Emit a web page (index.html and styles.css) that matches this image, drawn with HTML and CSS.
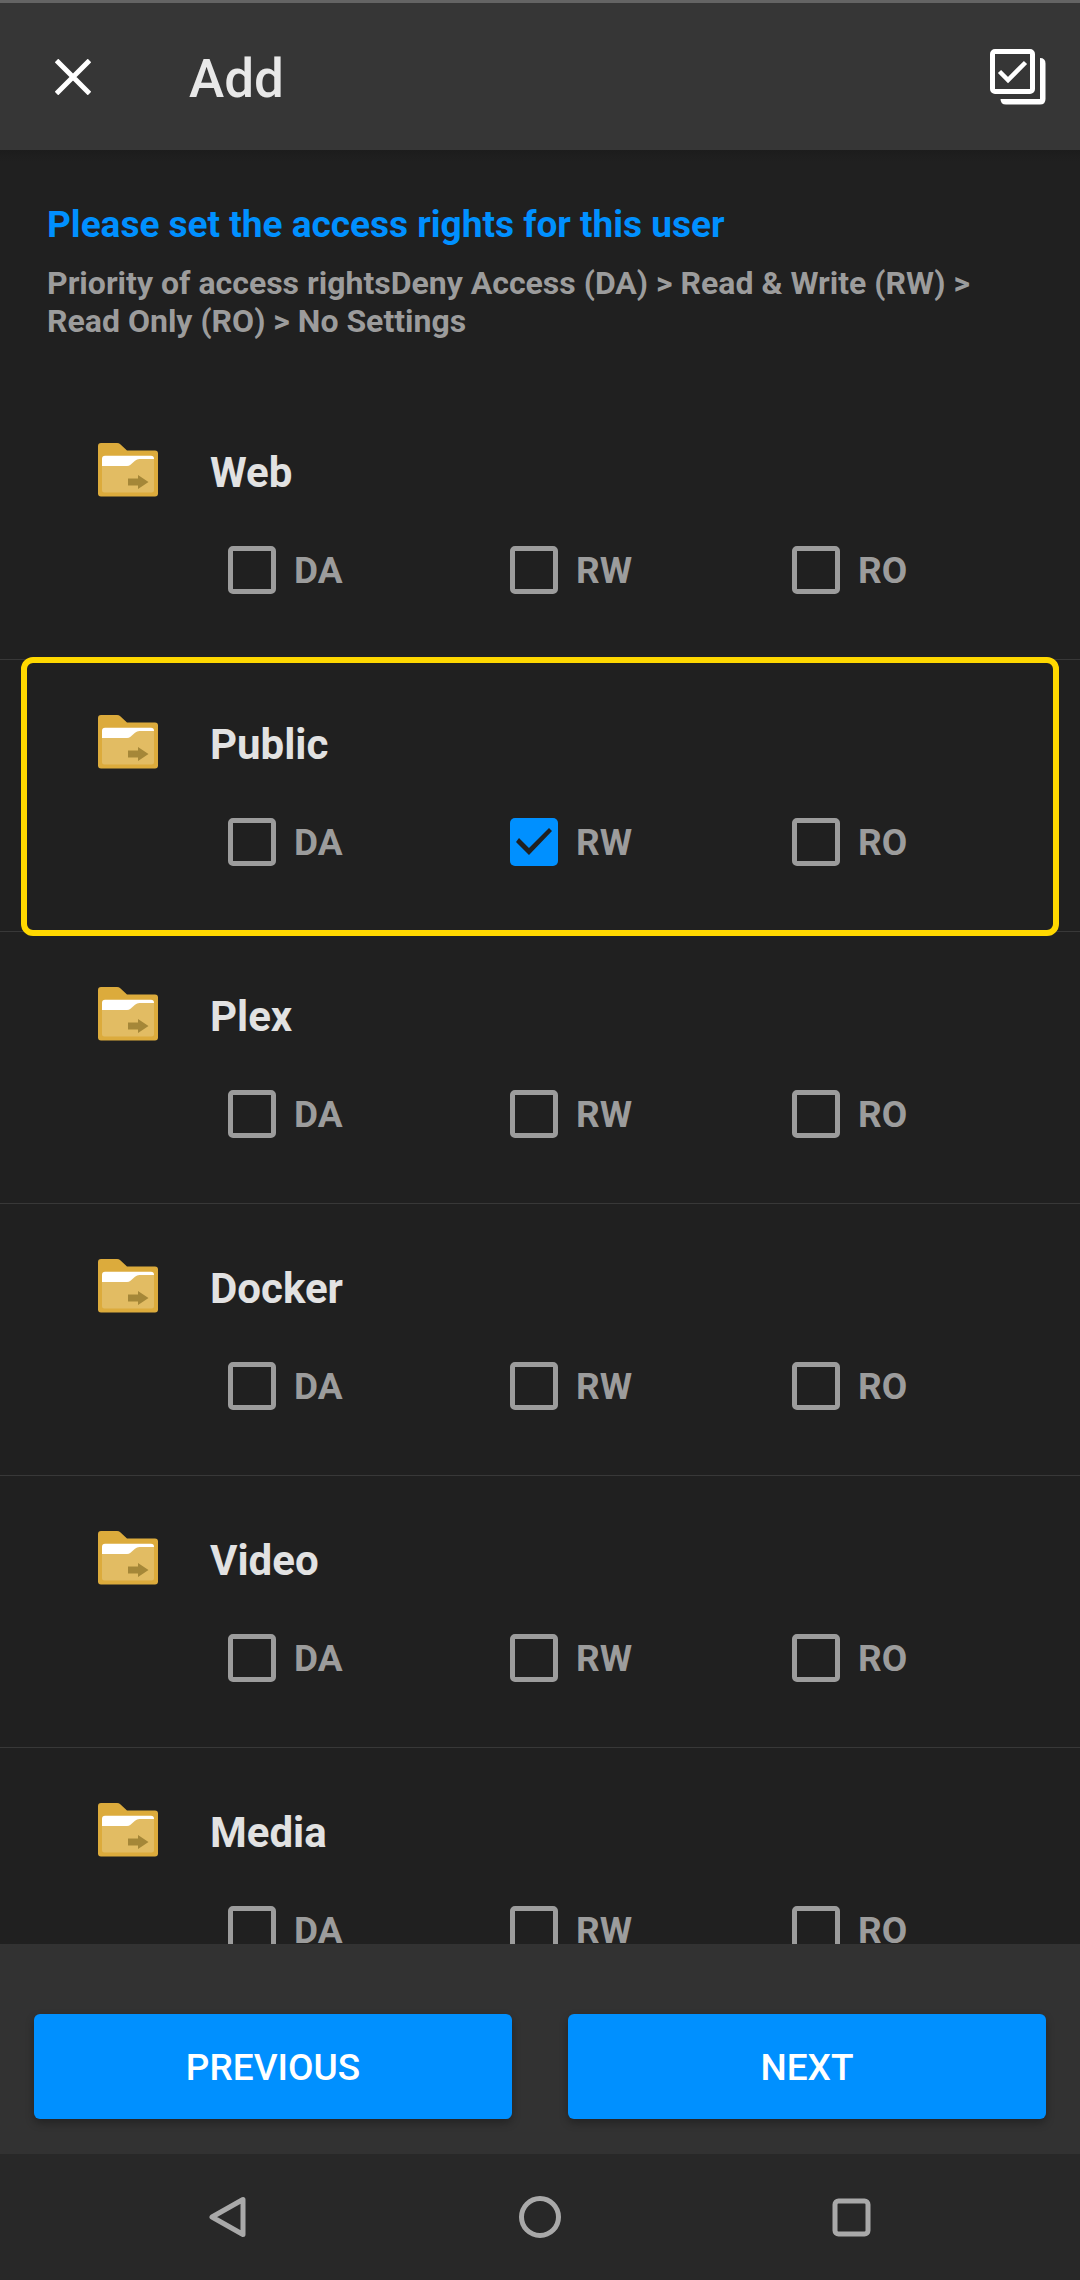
FILE: index.html
```html
<!DOCTYPE html>
<html lang="en">
<head>
  <meta charset="UTF-8" />
  <meta name="viewport" content="width=device-width, initial-scale=1.0"/>
  <title>Add</title>
  <link rel="stylesheet" href="styles.css">
</head>
<body>
  <svg width="0" height="0" class="symbols" aria-hidden="true">
    <symbol id="folder" viewBox="0 0 60 54">
      <path fill="#dcab3c" d="M3 0H19Q21 0 22 1L29 7.500H57Q60 7.500 60 10.500V50.500Q60 53.500 57 53.500H3Q0 53.500 0 50.500V3Q0 0 3 0Z"/>
      <path fill="#fff" d="M7 12.700H53Q56 12.700 56 15.700V26H4V15.700Q4 12.700 7 12.700Z"/>
      <path fill="#e2bc63" d="M4 23H29Q31 23 32.500 21.700L37 17.800Q39 16 41.500 16H56V47Q56 49.500 53.500 49.500H6.500Q4 49.500 4 47Z"/>
      <path fill="#a58738" d="M30 35.500H40V32L50.500 39L40 46V42.500H30Z"/>
    </symbol>
  </svg>

  <header class="topbar">
    <button type="button" class="icon-btn" aria-label="Close">
      <svg width="36" height="36" viewBox="0 0 36 36"><path d="M1.500 1.500L34.500 34.500M34.500 1.500L1.500 34.500" stroke="#fff" stroke-width="5"/></svg>
    </button>
    <h1>Add</h1>
    <button type="button" class="icon-btn" aria-label="Select all">
      <svg width="56" height="56" viewBox="0 0 56 56" fill="none" stroke="#fff">
        <rect x="2.500" y="2.500" width="40" height="40" rx="2.500" stroke-width="5"/>
        <path d="M9.500 22.500L18 31L35.500 13.500" stroke-width="4.500"/>
        <path fill="#fff" stroke="none" d="M50 9Q55.500 9 55.500 14.500V50Q55.500 55.500 50 55.500H16Q10.500 55.500 10.500 50H50Z"/>
      </svg>
    </button>
  </header>

  <main class="content">
    <div class="intro">
      <h2>Please set the access rights for this user</h2>
      <p>Priority of access rightsDeny Access (DA) &gt; Read &amp; Write (RW) &gt; Read Only (RO) &gt; No Settings</p>
    </div>
    <ul class="folders">
      <li class="folder">
        <div class="folder-head"><svg class="folder-icon"><use href="#folder"/></svg><h3>Web</h3></div>
        <div class="rights">
          <label><input type="checkbox" name="web-da">DA</label>
          <label><input type="checkbox" name="web-rw">RW</label>
          <label><input type="checkbox" name="web-ro">RO</label>
        </div>
      </li>
      <li class="folder highlight">
        <div class="folder-head"><svg class="folder-icon"><use href="#folder"/></svg><h3>Public</h3></div>
        <div class="rights">
          <label><input type="checkbox" name="public-da">DA</label>
          <label><input type="checkbox" name="public-rw" checked>RW</label>
          <label><input type="checkbox" name="public-ro">RO</label>
        </div>
      </li>
      <li class="folder">
        <div class="folder-head"><svg class="folder-icon"><use href="#folder"/></svg><h3>Plex</h3></div>
        <div class="rights">
          <label><input type="checkbox" name="plex-da">DA</label>
          <label><input type="checkbox" name="plex-rw">RW</label>
          <label><input type="checkbox" name="plex-ro">RO</label>
        </div>
      </li>
      <li class="folder">
        <div class="folder-head"><svg class="folder-icon"><use href="#folder"/></svg><h3>Docker</h3></div>
        <div class="rights">
          <label><input type="checkbox" name="docker-da">DA</label>
          <label><input type="checkbox" name="docker-rw">RW</label>
          <label><input type="checkbox" name="docker-ro">RO</label>
        </div>
      </li>
      <li class="folder">
        <div class="folder-head"><svg class="folder-icon"><use href="#folder"/></svg><h3>Video</h3></div>
        <div class="rights">
          <label><input type="checkbox" name="video-da">DA</label>
          <label><input type="checkbox" name="video-rw">RW</label>
          <label><input type="checkbox" name="video-ro">RO</label>
        </div>
      </li>
      <li class="folder">
        <div class="folder-head"><svg class="folder-icon"><use href="#folder"/></svg><h3>Media</h3></div>
        <div class="rights">
          <label><input type="checkbox" name="media-da">DA</label>
          <label><input type="checkbox" name="media-rw">RW</label>
          <label><input type="checkbox" name="media-ro">RO</label>
        </div>
      </li>
    </ul>
  </main>

  <footer class="actions">
    <button type="button">PREVIOUS</button>
    <button type="button">NEXT</button>
  </footer>

  <nav class="sysnav">
    <button type="button" class="icon-btn" aria-label="Back">
      <svg width="42" height="42" viewBox="0 0 42 42"><path d="M35 3.500V38.500L4 21Z"/></svg>
    </button>
    <button type="button" class="icon-btn" aria-label="Home">
      <svg width="42" height="42" viewBox="0 0 42 42"><circle cx="21" cy="21" r="18.500"/></svg>
    </button>
    <button type="button" class="icon-btn" aria-label="Recents">
      <svg width="42" height="42" viewBox="0 0 42 42"><rect x="5" y="5" width="33" height="33" rx="3.500"/></svg>
    </button>
  </nav>
</body>
</html>
```

FILE: styles.css
```css
* {
  margin: 0;
  padding: 0;
  box-sizing: border-box;
  font-family: Roboto, sans-serif;
}

body {
  background-color: #202020;
  height: 100vh;
  display: flex;
  flex-direction: column;
  color: #e2e2e2;
}

.symbols {
  position: absolute;
}

.icon-btn {
  display: flex;
  background: none;
  border: none;
  cursor: pointer;
}

.topbar {
  display: flex;
  align-items: center;
  height: 150px;
  padding: 0 34px 0 55px;
  border-top: 3px solid #646464;
  background-color: #363636;
}

.topbar h1 {
  flex: 1;
  margin-left: 98px;
  padding-top: 4px;
  font-size: 53px;
  font-weight: 500;
  color: #e8e8e8;
}

.content {
  flex: 1;
  min-height: 0;
  overflow: hidden;
  background: linear-gradient(#1c1c1c, #202020 12px);
}

.intro {
  padding: 53px 48px 48px 47px;
}

.intro h2 {
  font-size: 37px;
  line-height: 44px;
  font-weight: 700;
  color: #0090ff;
}

.intro p {
  margin-top: 17px;
  font-size: 32px;
  line-height: 38px;
  font-weight: 700;
  color: #9c9c9c;
}

.folders {
  list-style: none;
}

.folder {
  position: relative;
  height: 272px;
  padding-top: 55px;
  border-bottom: 1px solid #383838;
}

/* yellow frame drawn over the row and its dividers */
.highlight::after {
  content: "";
  position: absolute;
  inset: -3px 21px -5px;
  border: 6px solid #ffd800;
  border-radius: 12px;
  pointer-events: none;
}

.folder-head {
  display: flex;
  align-items: flex-start;
  gap: 52px;
  height: 60px;
  padding-left: 98px;
}

.folder-icon {
  width: 60px;
  height: 54px;
}

.folder-head h3 {
  font-size: 42px;
  line-height: 60px;
  font-weight: 700;
}

.rights {
  display: flex;
  margin-top: 43px;
  padding: 0 6px 0 228px;
}

.rights label {
  flex: 1;
  display: flex;
  align-items: flex-start;
  gap: 18px;
  font-size: 37px;
  line-height: 50px;
  font-weight: 700;
  color: #9c9c9c;
}

.rights input {
  appearance: none;
  width: 48px;
  height: 48px;
  border: 5px solid #9c9c9c;
  border-radius: 5px;
}

.rights input:checked {
  border: none;
  background-color: #0090ff;
}

.rights input:checked::after {
  content: "";
  display: block;
  height: 100%;
  background-color: #202020;
  clip-path: polygon(6px 24px, 9px 20px, 19px 30px, 39px 10px, 42px 13px, 19px 37px);
}

.actions {
  display: flex;
  gap: 56px;
  padding: 70px 34px 35px;
  background-color: #323232;
}

.actions button {
  flex: 1;
  height: 105px;
  padding-top: 2px;
  border: none;
  border-radius: 6px;
  background-color: #0090ff;
  box-shadow: 0 4px 8px rgba(0, 0, 0, 0.3);
  color: white;
  font-size: 37px;
  font-weight: 500;
  cursor: pointer;
}

.sysnav {
  display: flex;
  justify-content: center;
  align-items: center;
  gap: 269px;
  height: 126px;
  background-color: #282828;
}

.sysnav svg {
  fill: none;
  stroke: #a9a9a9;
  stroke-width: 5;
  stroke-linejoin: round;
}
```
